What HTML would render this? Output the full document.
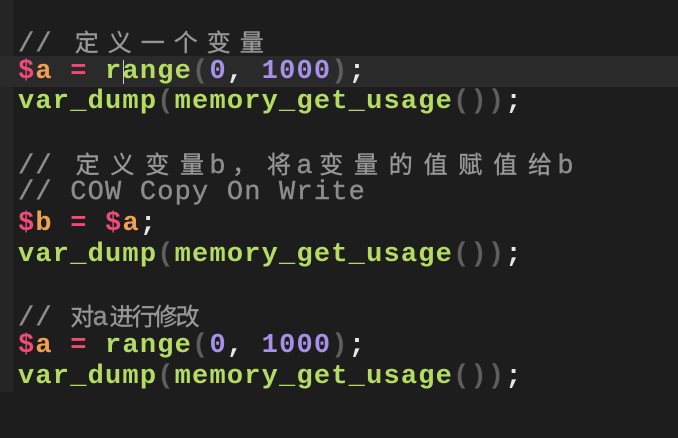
<!DOCTYPE html>
<html><head><meta charset="utf-8"><style>
html,body{margin:0;padding:0;}
body{width:678px;height:438px;background:#1d1d1d;position:relative;overflow:hidden;
font-family:"Liberation Mono","Noto Sans CJK SC",monospace;font-size:27px;letter-spacing:1.2px;}
.gut{position:absolute;left:0;top:0;width:13px;height:392px;background:#252525;}
.hl{position:absolute;left:0;top:56px;width:678px;height:31px;background:#2a2a2a;}
.l{position:absolute;left:18px;white-space:pre;line-height:30px;height:30px;font-weight:bold;}
.l.c{font-weight:normal;-webkit-text-stroke:0.4px #8c8c8c}
.c{color:#8c8c8c}.g{color:#b5dc62}.p{color:#ef4a78}.o{color:#f0a050}.n{color:#a690e8}.d{color:#5e5e5e}.w{color:#e8e8e8}
.k{display:inline-block;text-align:center;font-family:"Noto Sans CJK SC",sans-serif;font-size:24px;letter-spacing:0;color:#9a9a9a}
.k1{width:33px}.k2{width:34.8px}.k3{width:22px}
.cur{position:absolute;left:123px;top:60px;width:1px;height:24px;background:#ccc}
</style></head><body>
<div class="gut"></div><div class="hl"></div><div class="cur"></div>
<div class="l c" style="top:26px">// <span class="k k1">定</span><span class="k k1">义</span><span class="k k1">一</span><span class="k k1">个</span><span class="k k1">变</span><span class="k k1">量</span></div>
<div class="l" style="top:57px"><span class="p">$</span><span class="o">a</span> <span class="p">=</span> <span class="g">range</span><span class="d">(</span><span class="n">0</span><span class="w">,</span> <span class="n">1000</span><span class="d">)</span><span class="w">;</span></div>
<div class="l" style="top:87px"><span class="g">var_dump</span><span class="d">(</span><span class="g">memory_get_usage</span><span class="d">())</span><span class="w">;</span></div>
<div class="l c" style="top:148px">// <span class="k k2">定</span><span class="k k2">义</span><span class="k k2">变</span><span class="k k2">量</span>b<span class="k k2">，</span><span class="k k2">将</span>a<span class="k k2">变</span><span class="k k2">量</span><span class="k k2">的</span><span class="k k2">值</span><span class="k k2">赋</span><span class="k k2">值</span><span class="k k2">给</span>b</div>
<div class="l c" style="top:178px">// COW Copy On Write</div>
<div class="l" style="top:209px"><span class="p">$</span><span class="o">b</span> <span class="p">=</span> <span class="p">$</span><span class="o">a</span><span class="w">;</span></div>
<div class="l" style="top:240px"><span class="g">var_dump</span><span class="d">(</span><span class="g">memory_get_usage</span><span class="d">())</span><span class="w">;</span></div>
<div class="l c" style="top:300px">// <span class="k k3">对</span>a<span class="k k3">进</span><span class="k k3">行</span><span class="k k3">修</span><span class="k k3">改</span></div>
<div class="l" style="top:331px"><span class="p">$</span><span class="o">a</span> <span class="p">=</span> <span class="g">range</span><span class="d">(</span><span class="n">0</span><span class="w">,</span> <span class="n">1000</span><span class="d">)</span><span class="w">;</span></div>
<div class="l" style="top:362px"><span class="g">var_dump</span><span class="d">(</span><span class="g">memory_get_usage</span><span class="d">())</span><span class="w">;</span></div>
</body></html>
